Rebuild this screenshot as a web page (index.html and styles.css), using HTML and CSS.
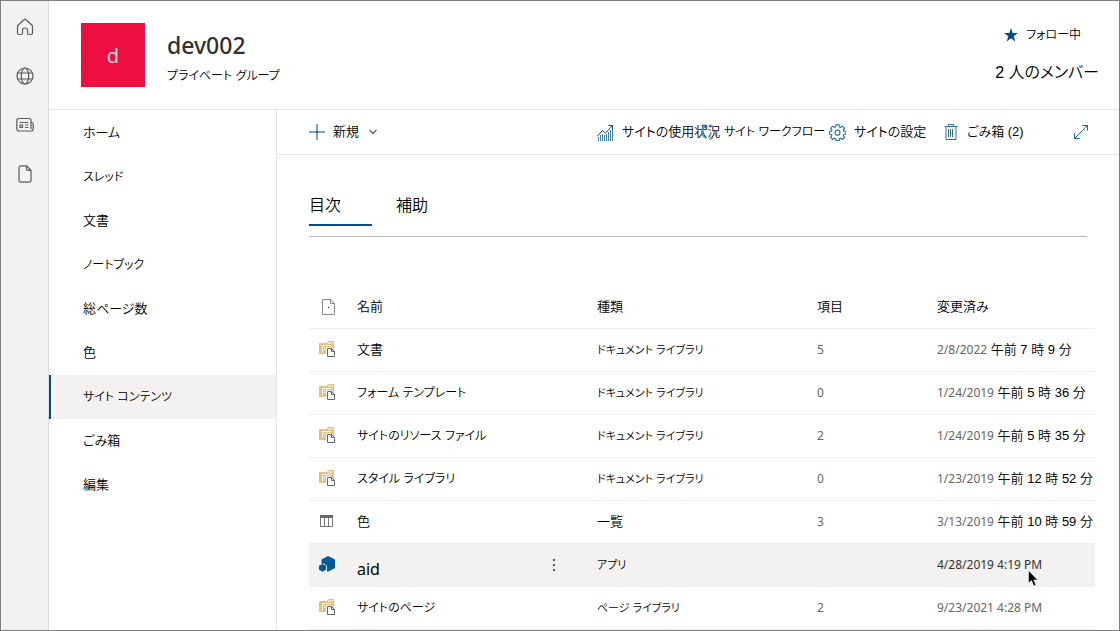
FILE: index.html
```html
<!DOCTYPE html>
<html lang="ja">
<head>
<meta charset="utf-8">
<title>dev002 - サイト コンテンツ</title>
<link rel="stylesheet" href="styles.css">
</head>
<body>
<svg class="defs" aria-hidden="true">
  <symbol id="library" viewBox="0 0 16 16">
    <path d="M0 2h8l1-2h6v13H0z" fill="#e8c07a"/>
    <path d="M9 1.500h5v1H9z" fill="#fff"/>
    <path d="M3.500 11V4.500h9" fill="none" stroke="#fff"/>
    <path d="M5 6h1v1H5zM5 8h1v1H5zM7 6h4v1H7z" fill="#fff"/>
    <path d="M7 6.500h5.500L16 10v6H7z" fill="#fff"/>
    <path d="M8.500 7.500h4l3 3v5h-7z" fill="#fff" stroke="#666"/>
    <path d="M12.500 7.500v3h3" fill="none" stroke="#666"/>
  </symbol>
</svg>
<div class="app">
  <nav class="rail" aria-label="アプリ バー">
    <a href="#" aria-label="ホーム"><svg width="18" height="18" viewBox="0 0 18 18"><path d="M2 7.200 8 1.800q1-.8 2 0l6 5.400q.5.600.5 1.300V15q0 1.500-1.500 1.500h-2q-1.500 0-1.500-1.500v-3q0-2-2.500-2T6.500 12v3q0 1.500-1.500 1.500H3Q1.500 16.500 1.500 15V8.500q0-.7.5-1.300z"/></svg></a>
    <a href="#" aria-label="サイト"><svg width="18" height="18" viewBox="0 0 18 18"><circle cx="9" cy="9" r="8"/><ellipse cx="9" cy="9" rx="3.700" ry="8"/><path d="M1.700 6h14.600M1.700 12h14.600"/></svg></a>
    <a href="#" aria-label="ニュース"><svg width="18" height="18" viewBox="0 0 18 18"><path d="M15 13V4.500Q15 2.500 13 2.500H3Q.8 2.500.8 4.500v8Q.8 15 3 15h12q2.200 0 2.200-2.500V8q0-1.500-2-1.500M3.500 6.500h9M4 9h2.500v2.500H4zM9 9h3.500M9 11.500h3.500"/></svg></a>
    <a href="#" aria-label="ファイル"><svg width="18" height="18" viewBox="0 0 18 18"><path d="M5 .8h5.500L15 5.300V15q0 2.200-2 2.200H5Q3 17.200 3 15V3Q3 .8 5 .8zM10.500.8V4q0 1.300 1.300 1.300H15"/></svg></a>
  </nav>
  <div class="site">
    <header class="header">
      <div class="logo">d</div>
      <div class="title">
        <h1>dev002</h1>
        <p>プライベート グループ</p>
      </div>
      <div class="meta">
        <button class="follow kana" type="button"><svg width="14" height="14" viewBox="0 0 14 14"><path d="M7 0 8.700 5H14L9.700 8.200 11.300 13.500 7 10.300 2.700 13.500 4.300 8.200 0 5h5.300z" fill="#004e8c"/></svg>フォロー中</button>
        <a class="members" href="#"><span>2</span> 人のメンバー</a>
      </div>
    </header>
    <div class="body">
      <nav class="side" aria-label="サイト">
        <a href="#">ホーム</a>
        <a class="kana" href="#">スレッド</a>
        <a href="#">文書</a>
        <a class="kana" href="#">ノートブック</a>
        <a href="#">総ページ数</a>
        <a href="#">色</a>
        <a class="kana current" href="#" aria-current="page">サイト コンテンツ</a>
        <a href="#">ごみ箱</a>
        <a href="#">編集</a>
      </nav>
      <main class="main">
        <div class="commands">
          <button type="button" class="new"><svg width="16" height="16" viewBox="0 0 16 16"><path d="M0 8h16M8 0v16" stroke="#7ba6cb" stroke-width="2"/><path d="M7 7h2v2H7z" fill="#1d65a3"/></svg>新規<svg class="chevron" width="8" height="6" viewBox="0 0 8 6"><path d="M.5 1 4 4.500 7.500 1" fill="none" stroke="#666" stroke-width="1.500"/></svg></button>
          <div class="tools">
            <button type="button"><svg width="17" height="17" viewBox="0 0 17 17" fill="none" stroke="#3f7fb5"><path d="M1.500 13v4M3.500 11v6M5.500 10v7M7.500 11v6M9.500 10v7M11.500 8v9M13.500 6v11M15.500 5v12"/><path d="M0 12.500 5.500 6.500l3 2.500L15.500 1.500M11.500 1.500h4v4" stroke="#004e8c"/></svg>サイトの使用状況</button>
            <button type="button" class="kana"><svg width="16" height="16" viewBox="0 0 16 16" fill="none" stroke="#5c93c2" stroke-width="1.500"><path d="M5 1.800A7 7 0 0 0 5 14.300M8 15a7 7 0 0 0 4-1.200M14 11.500a7 7 0 0 0 .8-5M12.500 2.800A7 7 0 0 0 8.500 1"/><path d="M1.500 1.500H5.500v4" stroke="#1d65a3"/></svg>サイト ワークフロー</button>
            <button type="button"><svg width="17" height="17" viewBox="0 0 17 17" fill="none" stroke="#2f75ae" stroke-width="1.200"><path d="M7 .8h3l.4 2 1.300.5L13.500 2.200l2 2-1.200 1.700.5 1.200 2 .4v2.500l-2 .4-.5 1.300 1.200 1.700-2 2-1.700-1.200-1.300.5-.4 2H7l-.4-2-1.300-.5-1.700 1.200-2-2 1.200-1.700-.5-1.300-2-.4V7.500l2-.4.500-1.200-1.200-1.700 2-2 1.700 1.100 1.300-.5z"/><circle cx="8.500" cy="8.700" r="2.500"/></svg>サイトの設定</button>
            <button type="button"><svg class="bin" width="14" height="16" viewBox="0 0 14 16" fill="none" stroke="#2f6ea5"><path d="M.5 2.500h13M4.500 2.500v-2h5v2M2 2.500v13h10v-13M4.500 5v8M6.500 5v8M8.500 5v8"/></svg><span>ごみ箱 (2)</span></button>
            <button type="button" aria-label="展開"><svg width="16" height="16" viewBox="0 0 16 16" fill="none" stroke="#1d65a3"><path d="M1 15 15 1M9.500 1.500h5v5M1.500 9.500v5h5"/></svg></button>
          </div>
        </div>
        <div class="tabs" role="tablist">
          <button type="button" role="tab" aria-selected="true">目次</button>
          <button type="button" role="tab" aria-selected="false">補助</button>
        </div>
        <table class="list">
          <colgroup><col class="c-icon"><col class="c-name"><col class="c-type"><col class="c-count"><col class="c-date"></colgroup>
          <thead>
            <tr>
              <th scope="col" aria-label="アイコン"><svg class="fileicon" width="16" height="16" viewBox="0 0 16 16"><path d="M2.500.5h8l4 4v11h-12zM10.500.5v4h4" fill="#fff" stroke="#888"/><path d="M8 8h1v1H8z"/></svg></th>
              <th scope="col">名前</th><th scope="col">種類</th><th scope="col">項目</th><th scope="col">変更済み</th>
            </tr>
          </thead>
          <tbody>
            <tr><td><svg width="16" height="16"><use href="#library"/></svg></td><td>文書</td><td class="type">ドキュメント ライブラリ</td><td class="num">5</td><td><span class="num">2/8/2022</span> 午前 7 時 9 分</td></tr>
            <tr><td><svg width="16" height="16"><use href="#library"/></svg></td><td class="kana">フォーム テンプレート</td><td class="type">ドキュメント ライブラリ</td><td class="num">0</td><td><span class="num">1/24/2019</span> 午前 5 時 36 分</td></tr>
            <tr><td><svg width="16" height="16"><use href="#library"/></svg></td><td class="kana">サイトのリソース ファイル</td><td class="type">ドキュメント ライブラリ</td><td class="num">2</td><td><span class="num">1/24/2019</span> 午前 5 時 35 分</td></tr>
            <tr><td><svg width="16" height="16"><use href="#library"/></svg></td><td class="kana">スタイル ライブラリ</td><td class="type">ドキュメント ライブラリ</td><td class="num">0</td><td><span class="num">1/23/2019</span> 午前 12 時 52 分</td></tr>
            <tr><td><svg width="16" height="16" viewBox="0 0 16 16"><path d="M1.500 2.500h12v11h-12zM5.500 4v9M9.500 4v9" fill="none" stroke="#777"/><path d="M1 2h13v3H1z" fill="#666"/></svg></td><td>色</td><td>一覧</td><td class="num">3</td><td><span class="num">3/13/2019</span> 午前 10 時 59 分</td></tr>
            <tr class="hover"><td><svg width="16" height="16" viewBox="0 0 16 16"><path d="M9 0 16 3.500v8.500L9.500 15.500H8V10L5 7.500 2.500 8V3.500z" fill="#005a9e"/><path d="M3.500 8 7 9.800v4L3.500 15.700 0 13.800v-4z" fill="#005a9e"/></svg></td><td><div class="named"><span class="app-name">aid</span><button type="button" class="more" aria-label="その他"><svg width="4" height="14" viewBox="0 0 4 14" fill="#555"><path d="M1 1h2v2H1zM1 6h2v2H1zM1 11h2v2H1z"/></svg></button></div></td><td class="type">アプリ</td><td></td><td class="date"><span class="num">4/28/2019 4:19 PM</span><svg class="cursor" width="11" height="17" viewBox="0 0 11 17"><path d="M.5.5v12.500l3-2.500 2.300 5.500 2.200-1-2.300-5h4z" fill="#000" stroke="#fff" stroke-width=".6"/></svg></td></tr>
            <tr><td><svg width="16" height="16"><use href="#library"/></svg></td><td class="kana">サイトのページ</td><td class="type">ページ ライブラリ</td><td class="num">2</td><td><span class="num">9/23/2021 4:28 PM</span></td></tr>
          </tbody>
        </table>
      </main>
    </div>
  </div>
</div>
</body>
</html>
```

FILE: styles.css
```css
* { box-sizing: border-box; }

body {
  margin: 0;
  color: #000;
  background: #fff;
  font: 350 13px/20px "Liberation Sans", "Noto Sans CJK JP", sans-serif;
  font-feature-settings: "palt";
}

a { color: inherit; text-decoration: none; }

button {
  padding: 0;
  border: 0;
  background: none;
  color: inherit;
  font: inherit;
  font-feature-settings: inherit;
  white-space: nowrap;
}

svg { display: block; flex: none; }
.defs { position: absolute; width: 0; height: 0; }
.kana { font-size: 12px; }

.app {
  display: flex;
  min-height: 100vh;
  border: 1px solid #808080;
}

.rail {
  display: flex;
  flex-direction: column;
  align-items: center;
  gap: 31px;
  width: 48px;
  padding-top: 17px;
  background: #f3f2f1;
  border-right: 1px solid #dcdcdc;
}
.rail svg { fill: none; stroke: #5a5a5a; stroke-width: 1.2; }

.site { flex: 1; display: flex; flex-direction: column; min-width: 0; }

.header {
  display: flex;
  align-items: flex-start;
  gap: 22px;
  height: 109px;
  padding: 22px 20px 0 32px;
  border-bottom: 1px solid #e6e6e6;
}

.logo {
  width: 64px;
  height: 64px;
  background: #ee0f40;
  color: #fbd5dd;
  font: 20px/66px "Noto Sans", sans-serif;
  text-align: center;
}

.title { flex: 1; }
.title h1 {
  margin: 0;
  color: #323130;
  font: 500 23px/44px "Noto Sans", sans-serif;
}
.title p { margin: 0; font-size: 12px; line-height: 18px; }

.meta {
  display: flex;
  flex-direction: column;
  gap: 18px;
  padding-top: 2px;
  white-space: nowrap;
}
.follow { display: flex; align-items: center; gap: 8px; padding-left: 9px; }
.members { font-size: 16px; }

.body { flex: 1; display: flex; }

.side {
  width: 228px;
  padding-top: 1px;
  border-right: 1px solid #e6e6e6;
}
.side a {
  display: block;
  height: 44px;
  padding-left: 32px;
  border-left: 2px solid transparent;
  line-height: 43px;
}
.side .kana { line-height: 45px; }
.side .current { background: #f3f2f1; border-left-color: #004e8c; }

.main { flex: 1; min-width: 0; }

.commands {
  display: flex;
  justify-content: space-between;
  height: 45px;
  padding: 0 30px 0 32px;
  border-bottom: 1px solid #e6e6e6;
}
.commands button { display: flex; align-items: center; gap: 8px; }
.commands .chevron { margin-left: 2px; }
.tools { display: grid; grid-template-columns: 104px 128px 115px 129px 16px; }
.tools .kana { gap: 7px; }
.tools .bin { margin-right: 1px; }

.tabs {
  display: flex;
  gap: 24px;
  margin: 30px 32px 0;
  padding-bottom: 10px;
  border-bottom: 1px solid #b8b8b8;
}
.tabs button {
  width: 63px;
  height: 41px;
  padding-top: 2px;
  border-bottom: 2px solid transparent;
  font-size: 16px;
  text-align: left;
}
.tabs [aria-selected="true"] { border-bottom-color: #004e8c; }

.list {
  width: calc(100% - 56px);
  margin: 48px 24px 0 32px;
  border-collapse: separate;
  border-spacing: 0;
  table-layout: fixed;
}
.c-icon { width: 48px; }
.c-type { width: 28%; }
.c-count { width: 120px; }
.c-date { width: 158px; }

.list th, .list td {
  height: 43px;
  padding: 0;
  border-bottom: 1px solid #eee;
  font-weight: inherit;
  text-align: left;
  white-space: nowrap;
}
.list th { height: 44px; }
.list svg { margin-left: 10px; }
.list tbody svg { margin-bottom: 2px; }
.list .fileicon { margin-left: 11px; }
.list .type { font-size: 11px; }
.list .num { color: #666; font: 12px/20px "Noto Sans", sans-serif; }
.list .hover td { background: #f3f2f1; border-bottom-color: #f3f2f1; }
.list .hover .num { color: #333; }

.named { display: flex; align-items: center; justify-content: space-between; padding-right: 41px; }
.app-name { padding-top: 8px; font: 16px/20px "Noto Sans", sans-serif; }
.list .more svg { margin: 0; }

.date { position: relative; }
.list .cursor { position: absolute; left: 91px; top: 26px; margin: 0; }
```
